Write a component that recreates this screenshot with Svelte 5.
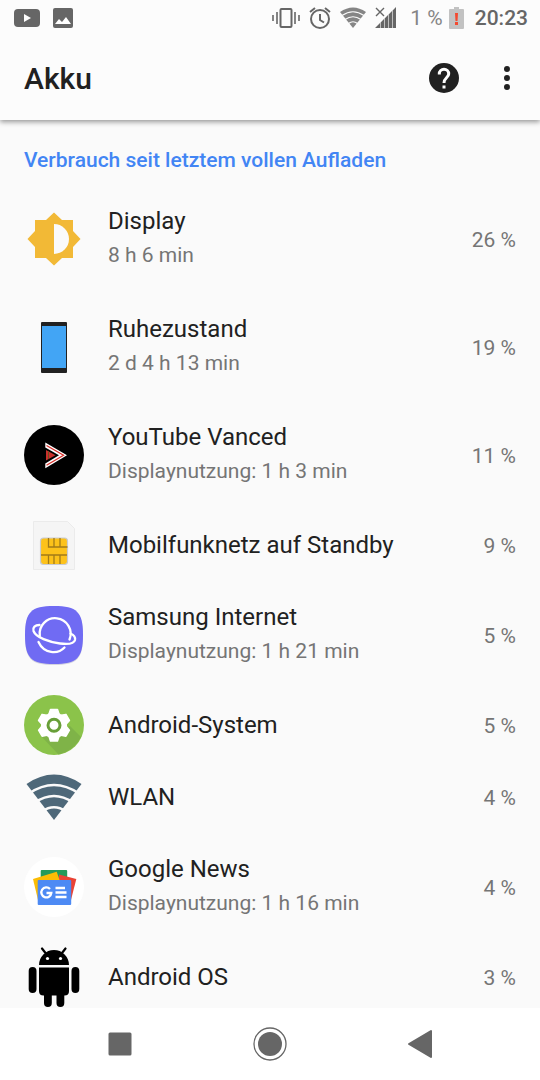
<script>
	const apps = [
		{ icon: "display", name: "Display", detail: "8 h 6 min", percent: 26 },
		{ icon: "phone", name: "Ruhezustand", detail: "2 d 4 h 13 min", percent: 19 },
		{ icon: "vanced", name: "YouTube Vanced", detail: "Displaynutzung: 1 h 3 min", percent: 11 },
		{ icon: "sim", name: "Mobilfunknetz auf Standby", percent: 9 },
		{ icon: "samsung", name: "Samsung Internet", detail: "Displaynutzung: 1 h 21 min", percent: 5 },
		{ icon: "system", name: "Android-System", percent: 5 },
		{ icon: "wlan", name: "WLAN", percent: 4 },
		{ icon: "news", name: "Google News", detail: "Displaynutzung: 1 h 16 min", percent: 4 },
		{ icon: "android", name: "Android OS", percent: 3 },
	];

	const teeth = [0, 60, 120, 180, 240, 300];
</script>

<div class="screen">
	<div class="status">
		<div class="notifications">
			<svg width="26" height="20" viewBox="0 0 26 20">
				<rect y="1" width="26" height="18" rx="4" fill="#666" />
				<path d="M10 6v8l7-4z" fill="#fff" />
			</svg>
			<svg width="20" height="20" viewBox="0 0 20 20">
				<rect width="20" height="20" rx="2" fill="#666" />
				<path d="M2 16l4-5 3 3 4-5 5 7z" fill="#fff" />
			</svg>
		</div>

		<div class="system">
			<svg width="28" height="22" viewBox="0 0 28 22" fill="none" stroke="#666" stroke-width="2">
				<rect x="8.500" y="2" width="11" height="18" rx="1" />
				<path d="M1 8v6M5 5v12M23 5v12M27 8v6" stroke-width="1.600" />
			</svg>
			<svg width="22" height="22" viewBox="0 0 22 22" fill="none" stroke="#666" stroke-width="2">
				<circle cx="11" cy="12" r="9" />
				<path d="M11 7v6l4 2.500M1 5l5-4M16 1l5 4" />
			</svg>
			<svg width="26" height="22" viewBox="0 0 26 22">
				<path d="M0 5Q13-4 26 5L13 21z" fill="#858585" />
				<path d="M2 8.500Q13 1 24 8.500M5 12.500Q13 7 21 12.500M8.500 16.500Q13 13 17.500 16.500" fill="none" stroke="#fcfcfc" stroke-width="1.200" />
			</svg>
			<svg width="22" height="22" viewBox="0 0 22 22">
				<path d="M0 21L5 16V21zM5.600 15.400L9 12V21H5.600zM9.600 11.400L13 8V21H9.600zM13.600 7.400L17 4V21H13.600zM17.600 3.400L21 0V21H17.600z" fill="#666" />
				<path d="M1 1l8 8M9 1L1 9" stroke="#666" stroke-width="1.400" />
			</svg>
			<span class="charge">1 %</span>
			<svg class="battery" width="15" height="22" viewBox="0 0 15 22">
				<path d="M1 2h4V0h5v2h4q1 0 1 1v18q0 1-1 1H1q-1 0-1-1V3q0-1 1-1z" fill="#c2c2c2" />
				<path d="M6 6h3l-.5 8h-2zM6 15h3v3H6z" fill="#f4492f" />
			</svg>
			<span class="clock">20:23</span>
		</div>
	</div>

	<header>
		<h1>Akku</h1>
		<button class="action" aria-label="Hilfe">
			<svg width="30" height="30" viewBox="0 0 30 30">
				<circle cx="15" cy="15" r="15" fill="#212121" />
				<path d="M10.300 11.500V11A4.700 4.700 0 0 1 19.700 11C19.700 14.500 15 14.800 15 20" fill="none" stroke="#fff" stroke-width="3" />
				<rect x="13.500" y="22.500" width="3" height="3" fill="#fff" />
			</svg>
		</button>
		<button class="action" aria-label="Weitere Optionen">
			<svg width="6" height="24" viewBox="0 0 6 24" fill="#212121">
				<circle cx="3" cy="3" r="3" />
				<circle cx="3" cy="12" r="3" />
				<circle cx="3" cy="21" r="3" />
			</svg>
		</button>
	</header>

	<main>
		<h2>Verbrauch seit letztem vollen Aufladen</h2>
		<ul>
			{#each apps as app}
				<li>
					<button class="row" class:tall={app.detail}>
						<svg class="icon" viewBox="0 0 60 60">
							{#if app.icon === "display"}
								<path d="M30 3.500L38 11H49V22L56.500 30L49 38V49H38L30 56.500L22 49H11V38L3.500 30L11 22V11H22z" fill="#f2b936" />
								<path d="M30 15a15 15 0 0 1 0 30z" fill="#fafafa" />
							{:else if app.icon === "phone"}
								<rect x="17" y="5" width="26" height="51" rx="1" fill="#212121" />
								<rect x="18" y="9" width="24" height="42" fill="#42a5f5" />
							{:else if app.icon === "vanced"}
								<circle cx="30" cy="30" r="30" fill="#000" />
								<path d="M21.300 17.500L43 30.300L21.300 43.300V38.500L35 30.300L21.300 22.500z" fill="#fff" />
								<path d="M22.500 20.500L39.500 30.300L22.500 40.300" fill="none" stroke="#d8302b" stroke-width="1.300" />
								<path d="M22 25v10.500l9.500-5.200z" fill="#c9302c" />
								<path d="M24.500 26v8" stroke="#6f4c1d" />
							{:else if app.icon === "sim"}
								<path d="M9.500 6.500H43.500L50.500 13.500V54.500H9.500z" fill="#f5f5f5" stroke="#ebebeb" />
								<rect x="16.500" y="23" width="27" height="26.500" rx="3" fill="#fdc21a" stroke="#c9cbd3" stroke-width="1.200" />
								<path d="M24.500 23v9h19M30 23v9M36 23v9M17 40h26M24.500 40v9M30 40v9M36 40v9" fill="none" stroke="#a37b18" stroke-width="1.300" />
							{:else if app.icon === "samsung"}
								<path d="M30 2C53 2 59 8 59 31S53 60 30 60S1 54 1 31S7 2 30 2z" fill="#d4d4df" />
								<path d="M30 1C53 1 59 7 59 30S53 59 30 59S1 53 1 30S7 1 30 1z" fill="#706bf3" />
								<g fill="none" stroke="#fff" stroke-width="2.300" stroke-linecap="round">
									<path d="M15.800 31A15.500 15.500 0 1 1 45.500 34.500" />
									<path d="M15.500 20C11 20 8.500 22.500 9.500 26C12 32.500 25 37 36 38.500C44 39.500 50 39 51 35C51.500 32 49 29.500 46.500 28.500" />
									<path d="M14.500 37C20 49 34 49.500 40.500 42.500" />
								</g>
							{:else if app.icon === "system"}
								<circle cx="30" cy="30" r="30" fill="#8bc34a" />
								<path d="M17 41L34.500 59.500Q50 56 57 42L46 31z" fill="#7fb348" />
								<circle cx="30" cy="30.300" r="13" fill="#fff" />
								{#each teeth as angle}
									<path d="M25 19L26.500 14.500H33.500L35 19z" fill="#fff" stroke="#fff" stroke-width="1.500" stroke-linejoin="round" transform="rotate({angle} 30 30.300)" />
								{/each}
								<circle cx="30" cy="30.300" r="6" fill="#fff" stroke="#689f38" stroke-width="3" />
							{:else if app.icon === "wlan"}
								<path d="M2.500 17Q30-2 57.500 17L30 53z" fill="#4e6879" />
								<g fill="none" stroke="#fafafa" stroke-width="2.400">
									<path d="M5 26.500Q30 9.500 55 26.500" />
									<path d="M11 35.500Q30 22.500 49 35.500" />
									<path d="M18 44.500Q30 36 42 44.500" />
								</g>
							{:else if app.icon === "news"}
								<circle cx="30" cy="30" r="30" fill="#fff" />
								<rect x="16.700" y="13" width="26.500" height="20" rx="1" fill="#249a5a" />
								<path d="M35 17.500L52.300 22L47 43L35 40z" fill="#ea4335" />
								<path d="M9 22L32.700 14.800L37 27L14 43z" fill="#fbbc04" />
								<rect x="13.700" y="23" width="33.500" height="25" rx="1" fill="#4d8af4" />
								<path d="M26 32A5 5 0 1 0 27.300 36H22.500" fill="none" stroke="#fff" stroke-width="2.300" />
								<path d="M31.500 31h9.500M31.500 35.500h11M31.500 40h11" stroke="#fff" stroke-width="2.300" />
							{:else}
								<path d="M18 1.500L21.500 6M41.500 1.500L38 6" stroke="#000" stroke-width="2.200" stroke-linecap="round" />
								<path d="M15 18A15 15 0 0 1 45 18z" />
								<path d="M15 20.500H45V44Q45 48.500 40.500 48.500H19.500Q15 48.500 15 44z" />
								<rect x="4.700" y="20" width="7.800" height="26" rx="3.900" />
								<rect x="47.500" y="20" width="7.800" height="26" rx="3.900" />
								<rect x="20" y="40" width="7.800" height="20" rx="3.900" />
								<rect x="32.500" y="40" width="7.800" height="20" rx="3.900" />
								<circle cx="23.500" cy="11.500" r="1.600" fill="#fff" />
								<circle cx="36.500" cy="11.500" r="1.600" fill="#fff" />
							{/if}
						</svg>
						<span class="text">
							<span class="name">{app.name}</span>
							{#if app.detail}
								<span class="detail">{app.detail}</span>
							{/if}
						</span>
						<span class="percent">{app.percent} %</span>
					</button>
				</li>
			{/each}
		</ul>
	</main>

	<nav>
		<button aria-label="Letzte Apps">
			<svg width="24" height="24" viewBox="0 0 24 24">
				<rect x="0.500" y="0.500" width="23" height="23" rx="1.500" fill="#666" />
			</svg>
		</button>
		<button aria-label="Startseite">
			<svg width="34" height="34" viewBox="0 0 34 34">
				<circle cx="17" cy="17" r="16" fill="none" stroke="#666" stroke-width="1.300" />
				<circle cx="17" cy="17" r="12" fill="#666" />
			</svg>
		</button>
		<button aria-label="Zurück">
			<svg width="26" height="30" viewBox="0 0 26 30">
				<path d="M2 15L24 2V28z" fill="#666" stroke="#666" stroke-width="2" stroke-linejoin="round" />
			</svg>
		</button>
	</nav>
</div>

<style>
	:global(body) {
		margin: 0;
	}

	.screen {
		display: flex;
		flex-direction: column;
		height: 100vh;
		background: #fafafa;
		color: #212121;
		font-family: Roboto, "Liberation Sans", sans-serif;
	}

	svg {
		display: block;
		flex-shrink: 0;
	}

	button {
		padding: 0;
		border: 0;
		background: none;
		color: inherit;
		font: inherit;
		cursor: pointer;
	}

	/* status bar */

	.status {
		display: flex;
		justify-content: space-between;
		align-items: center;
		flex-shrink: 0;
		height: 36px;
		padding: 0 12px 0 14px;
		background: #fcfcfc;
		color: #666;
		font-size: 21px;
	}

	.notifications {
		display: flex;
		gap: 13px;
	}

	.system {
		display: flex;
		align-items: center;
		gap: 9px;
	}

	.charge {
		margin-left: 4px;
		color: #858585;
	}

	.battery {
		margin-left: -3px;
	}

	.clock {
		margin-left: 2px;
		font-weight: 500;
	}

	/* app bar */

	header {
		display: flex;
		align-items: center;
		flex-shrink: 0;
		z-index: 1;
		height: 84px;
		padding: 0 3px 0 24px;
		background: #fcfcfc;
		box-shadow: 0 2px 5px rgba(0, 0, 0, 0.4);
		clip-path: inset(0 0 -12px 0);
	}

	h1 {
		flex: 1;
		margin: 0;
		font-size: 30px;
		font-weight: 500;
	}

	.action {
		display: flex;
		justify-content: center;
		align-items: center;
		width: 60px;
		height: 60px;
	}

	.action:last-child {
		margin-left: 3px;
	}

	/* list */

	main {
		flex: 1;
		overflow-y: auto;
		scrollbar-width: none;
	}

	h2 {
		margin: 0;
		padding: 24px 24px 9px;
		color: #4285f4;
		font-size: 21px;
		font-weight: 500;
		line-height: 32px;
	}

	ul {
		margin: 0;
		padding: 0;
		list-style: none;
	}

	.row {
		display: flex;
		align-items: center;
		gap: 24px;
		width: 100%;
		min-height: 72px;
		padding: 0 24px;
		text-align: left;
	}

	.tall {
		min-height: 108px;
	}

	.icon {
		width: 60px;
		height: 60px;
	}

	.text {
		display: flex;
		flex-direction: column;
		flex: 1;
	}

	.name {
		font-size: 24px;
		line-height: 32px;
	}

	.detail {
		color: #757575;
		font-size: 21px;
		line-height: 36px;
	}

	.percent {
		padding-top: 2px;
		color: #757575;
		font-size: 21px;
	}

	/* navigation bar */

	nav {
		display: flex;
		flex-shrink: 0;
		height: 72px;
		padding: 0 45px;
		background: #fff;
	}

	nav button {
		display: flex;
		flex: 1;
		justify-content: center;
		align-items: center;
	}
</style>
